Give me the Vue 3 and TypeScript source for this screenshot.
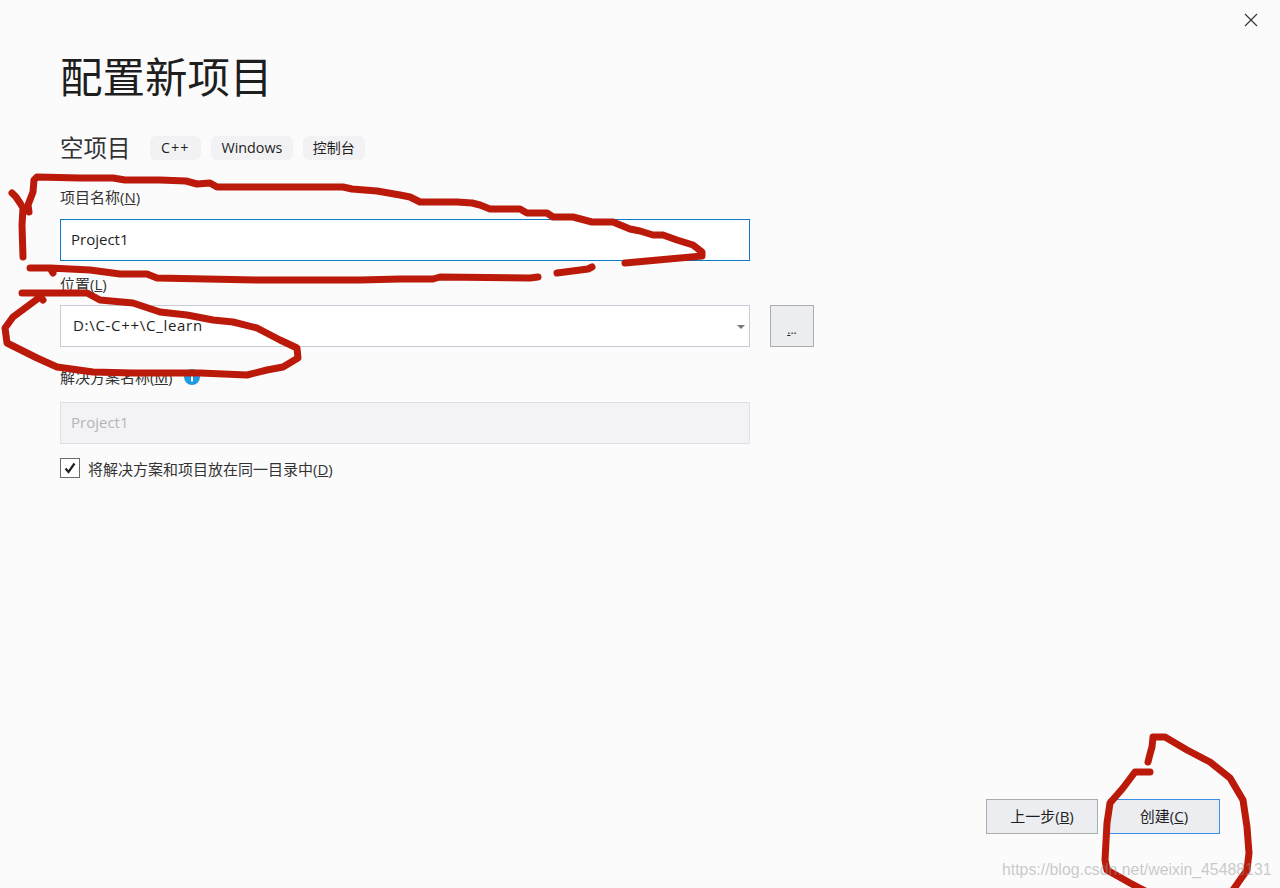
<script setup lang="ts">
interface Chip { text: string; kind: string }
const chips: Chip[] = [
  { text: 'C++', kind: 'cpp' },
  { text: 'Windows', kind: 'win' },
  { text: '控制台', kind: 'cjk' }
]
const strokes: string[] = [
  'M12 193 L16 197 L20 203 L23 208 L22 225 L23 257',
  'M29 212 L28 205 L33 192 L34 180 L37 177 L80 178 L113 178 L125 180 L160 180 L186 181 L197 184 L210 183 L217 187 L273 187 L343 187 L352 189 L377 191 L400 195 L410 197 L420 202 L457 202 L472 203 L480 205 L490 209 L520 209 L527 213 L547 213 L553 217 L573 217 L592 222 L613 222 L630 229 L640 231 L653 235 L663 235 L677 240 L693 245 L702 252 L702 256 L625 263',
  'M30 268 L50 268 L53 273 M50 268 L90 270 L120 274 L147 274 L157 278 L260 280 L360 280 L400 279 L433 279 L440 277 L530 278 L538 277',
  'M557 273 L588 269 L592 267',
  'M22 293 L87 293 L100 300 L133 303 L160 312 L187 315 L213 320 L233 322 L257 328 L280 340 L297 348 L298 358 L283 367 L267 370 L247 375 L200 373 L133 373 L93 372 L57 367 L37 358 L7 343 L5 328 L13 317 L40 297 L43 300',
  'M1148 762 L1150 754 L1152 747 L1153 737 L1165 737 L1187 750 L1210 762 L1230 778 L1243 800 L1247 827 L1249 853 L1247 870 L1233 890',
  'M1150 772 L1135 772 L1123 788 L1110 803 L1107 823 L1105 860 L1107 870 L1130 883 L1147 892'
]
</script>

<template>
  <div class="page">
    <div class="top">
      <svg class="close" width="14" height="14" viewBox="0 0 14 14">
        <path d="M1 1 L13 13 M13 1 L1 13" stroke="#333" stroke-width="1.1" fill="none" />
      </svg>
    </div>
    <h1 class="title">配置新项目</h1>
    <div class="subhead">
      <span class="subtitle">空项目</span>
      <span v-for="c in chips" :key="c.text" class="chip" :class="c.kind">{{ c.text }}</span>
    </div>

    <label class="label first">项目名称(<u>N</u>)</label>
    <div class="field active"><span class="value">Project1</span></div>

    <label class="label second">位置(<u>L</u>)</label>
    <div class="row">
      <div class="field select">
        <span class="value path">D:\C-C++\C_learn</span>
        <span class="arrow"></span>
      </div>
      <button class="btn browse"><u>.</u>..</button>
    </div>

    <label class="label third">解决方案名称(<u>M</u>)<svg class="info" width="16" height="16" viewBox="0 0 16 16">
        <circle cx="8" cy="8" r="8" fill="#1e9be0" />
        <rect x="7" y="3" width="2" height="2" fill="#fff" />
        <rect x="7" y="6.5" width="2" height="6" fill="#fff" />
      </svg></label>
    <div class="field disabled"><span class="value">Project1</span></div>

    <div class="check-row">
      <span class="check">
        <svg width="14" height="14" viewBox="0 0 14 14">
          <path d="M2.5 7.5 L5.5 11 L11.5 2.5" stroke="#222" stroke-width="2.2" fill="none" />
        </svg>
      </span>
      <span class="check-text">将解决方案和项目放在同一目录中(<u>D</u>)</span>
    </div>

    <div class="footer">
      <button class="btn action">上一步(<u>B</u>)</button>
      <button class="btn action primary">创建(<u>C</u>)</button>
    </div>

    <svg class="ink" width="1280" height="888" viewBox="0 0 1280 888">
      <path
        v-for="(d, i) in strokes"
        :key="i"
        :d="d"
        fill="none"
        stroke="#bb1a0a"
        stroke-width="7"
        stroke-linecap="round"
        stroke-linejoin="round"
      />
    </svg>
    <div class="watermark">https://blog.csdn.net/weixin_45488131</div>
  </div>
</template>

<style>
html, body { margin: 0; padding: 0; background: #fbfbfc; }
</style>

<style scoped>
.page {
  position: relative;
  width: 1280px;
  height: 888px;
  box-sizing: border-box;
  overflow: hidden;
  padding: 0 60px;
  display: flex;
  flex-direction: column;
  align-items: flex-start;
  background: #fbfbfc;
  color: #1e1e1e;
  font-family: "Open Sans", "Noto Sans CJK SC", sans-serif;
  font-size: 15px;
}
.top {
  align-self: stretch;
  height: 13px;
  margin-right: -38px;
  padding-top: 13px;
  display: flex;
  justify-content: flex-end;
}
.close { display: block; }
.title {
  margin: 23px 0 0;
  height: 56px;
  line-height: 56px;
  font-size: 42.5px;
  font-weight: 400;
  color: #1e1e1e;
}
.subhead {
  margin-top: 31px;
  height: 24px;
  display: flex;
  align-items: center;
  gap: 10px;
}
.subtitle {
  font-size: 23.5px;
  line-height: 24px;
  width: 80px;
  color: #333;
}
.chip {
  height: 24px;
  line-height: 24px;
  padding: 0 11px;
  border-radius: 6px;
  background: #f2f2f4;
  font-size: 14.3px;
  color: #1e1e1e;
}
.cpp { letter-spacing: 1px; padding: 0 12px 0 11px; width: 28px; }
.win { padding: 0 10.5px; }
.cjk { font-size: 14px; padding: 0 10px; }
.label {
  display: flex;
  align-items: center;
  height: 20px;
  line-height: 20px;
  color: #333;
  white-space: pre;
}
.first { margin-top: 27px; }
.second { margin-top: 13px; }
.third { margin-top: 20px; }
.info { margin-left: 12px; }
.field {
  width: 690px;
  height: 42px;
  box-sizing: border-box;
  border: 1px solid #c8c9d6;
  background: #fff;
  display: flex;
  align-items: center;
  margin-top: 11px;
  position: relative;
}
.active { border-color: #0c7bc6; margin-top: 12px; }
.disabled {
  background: #f3f3f6;
  border-color: #dedfe6;
  color: #b4b4b8;
  margin-top: 15px;
}
.value { padding: 0 0 2px 10px; }
.path { padding-left: 12px; letter-spacing: 0.7px; }
.row {
  display: flex;
  gap: 20px;
  align-items: flex-start;
}
.arrow {
  position: absolute;
  right: 4px;
  top: 19px;
  border-left: 4px solid transparent;
  border-right: 4px solid transparent;
  border-top: 4px solid #777;
}
.btn {
  font: inherit;
  color: #1e1e1e;
  background: #ecedf1;
  border: 1px solid #acacac;
  border-radius: 0;
  padding: 0;
  cursor: default;
}
.browse {
  width: 44px;
  height: 42px;
  margin-top: 11px;
  line-height: 1;
  padding-top: 8px;
  font-size: 12px;
}
.check-row {
  margin-top: 14px;
  display: flex;
  align-items: center;
  gap: 8px;
  height: 20px;
}
.check {
  width: 20px;
  height: 20px;
  box-sizing: border-box;
  border: 1px solid #6b6b6b;
  background: #fff;
  display: flex;
  align-items: center;
  justify-content: center;
}
.check-text { color: #333; }
.footer {
  margin-top: auto;
  margin-bottom: 54px;
  align-self: flex-end;
  display: flex;
  gap: 10px;
}
.action {
  width: 112px;
  height: 35px;
  text-align: center;
  padding-bottom: 2px;
}
.primary { border-color: #3b8fe8; }
.ink {
  position: absolute;
  left: 0;
  top: 0;
  pointer-events: none;
}
.watermark {
  position: absolute;
  left: 1002px;
  top: 859px;
  font-family: "Liberation Sans", Arial, sans-serif;
  font-size: 15.85px;
  line-height: 22px;
  white-space: nowrap;
  color: rgba(150, 150, 150, 0.5);
}
</style>
